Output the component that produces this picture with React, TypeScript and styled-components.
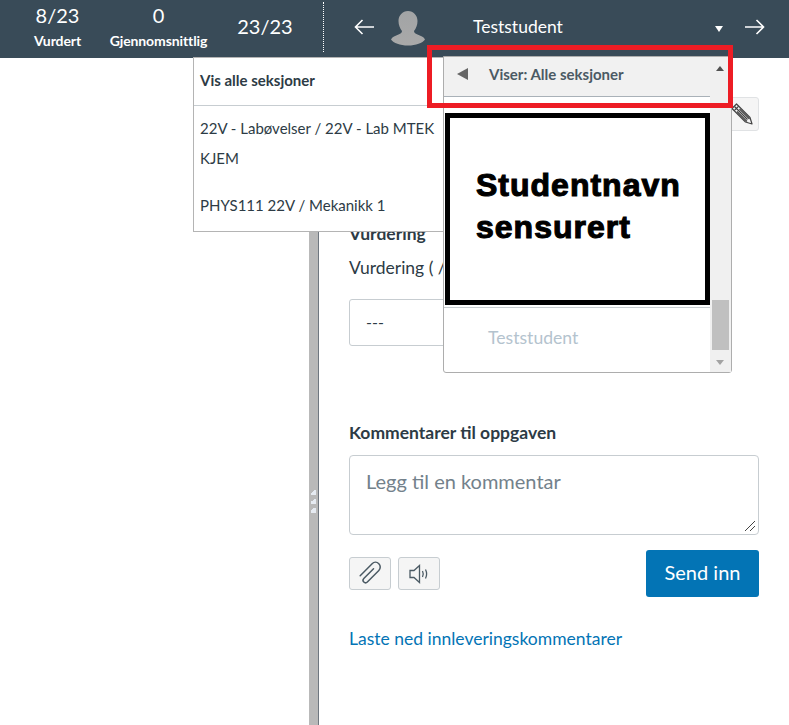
import React from "react";
import styled, { createGlobalStyle } from "styled-components";

const Global = createGlobalStyle`
  html, body { margin: 0; padding: 0; background: #fff; }
  body { font-family: "Lato", "Liberation Sans", sans-serif; color: #2d3b45; overflow: hidden; }
  * { box-sizing: border-box; }
`;

const Page = styled.div`
  position: relative;
  width: 789px;
  height: 725px;
  overflow: hidden;
`;

const Header = styled.header`
  height: 58px;
  background: #394b58;
  color: #fff;
  display: flex;
  align-items: flex-start;
`;

const Stat = styled.div<{ w: number }>`
  width: ${({ w }) => w}px;
  flex: none;
  display: flex;
  flex-direction: column;
  align-items: center;
  padding-top: 2px;
`;

const StatValue = styled.div`
  font-size: 20px;
  line-height: 26px;
`;

const StatLabel = styled.div`
  font-size: 14px;
  font-weight: 700;
  line-height: 16px;
  margin-top: 5px;
  letter-spacing: -0.1px;
  white-space: nowrap;
`;

const LoneStat = styled(Stat)`
  margin-left: 9px;
`;

const LoneValue = styled(StatValue)`
  margin-top: 11px;
`;

const Dotted = styled.div`
  width: 0;
  height: 50px;
  margin: 2px 30px 0 4px;
  border-left: 1px dotted #fff;
`;

const NavIcon = styled.svg`
  flex: none;
  width: 20px;
  height: 16px;
  margin-top: 19px;
`;

const Avatar = styled.svg`
  flex: none;
  width: 36px;
  height: 36px;
  margin: 10px 47px 0 16px;
`;

const StudentName = styled.div`
  flex: none;
  width: 240px;
  font-size: 17.5px;
  line-height: 24px;
  margin-top: 15px;
`;

const Caret = styled.div`
  flex: none;
  width: 0;
  height: 0;
  margin: 26px 22px 0 2px;
  border-left: 4px solid transparent;
  border-right: 4px solid transparent;
  border-top: 6px solid #fff;
`;

const Body = styled.div`
  display: flex;
  height: 667px;
`;

const LeftPane = styled.div`
  width: 309px;
  flex: none;
`;

const Resizer = styled.div`
  position: relative;
  width: 10px;
  flex: none;
  background: #b9b9b9;
  border-right: 1px solid #6f7780;
`;

const Grip = styled.div`
  position: absolute;
  left: 2px;
  top: 432px;
  display: flex;
  flex-direction: column;
  gap: 4px;
`;

const GripDot = styled.span`
  display: block;
  width: 5px;
  height: 5px;
  background: linear-gradient(135deg, #b9b9b9 30%, #e6ebf2 30%);
`;

const Detail = styled.main`
  flex: 1;
  padding: 39px 30px 0;
  display: flex;
  flex-direction: column;
`;

const EditRow = styled.div`
  display: flex;
  justify-content: flex-end;
`;

const EditButton = styled.div`
  width: 44px;
  height: 34px;
  background: #f5f5f5;
  border: 1px solid #e0e2e4;
  border-radius: 3px;
  display: flex;
  align-items: center;
  justify-content: flex-end;
  padding-right: 5px;
`;

const SectionTitle = styled.div`
  font-size: 17.5px;
  font-weight: 700;
  line-height: 20px;
`;

const GradeTitle = styled(SectionTitle)`
  margin-top: 93px;
`;

const GradeLabel = styled.div`
  font-size: 17.5px;
  line-height: 24px;
  margin-top: 12px;
`;

const GradeInput = styled.div`
  width: 200px;
  height: 47px;
  margin-top: 19px;
  padding-left: 16px;
  border: 1px solid #c7cdd1;
  border-radius: 3px;
  font-size: 16px;
  line-height: 43px;
`;

const CommentTitle = styled(SectionTitle)`
  margin-top: 77px;
`;

const CommentBox = styled.div`
  position: relative;
  height: 80px;
  margin-top: 12px;
  padding: 12px 16px;
  border: 1px solid #c7cdd1;
  border-radius: 4px;
  font-size: 20px;
  line-height: 26px;
  color: #73818b;
`;

const ResizeHandle = styled.svg`
  position: absolute;
  right: 2px;
  bottom: 2px;
  width: 12px;
  height: 12px;
`;

const ActionRow = styled.div`
  display: flex;
  align-items: flex-start;
  margin-top: 15px;
`;

const IconButton = styled.div`
  width: 42px;
  height: 33px;
  margin: 7px 7px 0 0;
  background: #f5f5f5;
  border: 1px solid #c7cdd1;
  border-radius: 3px;
  display: flex;
  align-items: center;
  justify-content: center;
`;

const SendButton = styled.div`
  width: 113px;
  height: 47px;
  margin-left: auto;
  background: #0374b5;
  border-radius: 3px;
  color: #fff;
  font-size: 20px;
  line-height: 44px;
  text-align: center;
`;

const DownloadLink = styled.a`
  margin-top: 31px;
  font-size: 17.5px;
  line-height: 22px;
  color: #0374b5;
`;

const SectionMenu = styled.div`
  position: absolute;
  left: 193px;
  top: 57px;
  width: 251px;
  height: 175px;
  background: #fff;
  border: 1px solid #b4b4b4;
  font-size: 15px;
`;

const MenuHead = styled.div`
  height: 48px;
  padding: 12px 6px 0;
  border-bottom: 1px solid #c7cdd1;
  font-weight: 700;
  line-height: 20px;
`;

const MenuItem = styled.div<{ gap: number }>`
  padding: 0 6px;
  margin-top: ${({ gap }) => gap}px;
  line-height: 30px;
`;

const StudentMenu = styled.div`
  position: absolute;
  left: 443px;
  top: 56px;
  width: 289px;
  height: 317px;
  background: #fff;
  border: 1px solid #adadad;
  border-radius: 0 0 3px 3px;
  display: flex;
`;

const MenuColumn = styled.div`
  flex: 1;
  min-width: 0;
  display: flex;
  flex-direction: column;
`;

const BackRow = styled.div`
  height: 40px;
  flex: none;
  padding-bottom: 5px;
  background: #f1f1f1;
  border-bottom: 1px solid #a9b1b8;
  display: flex;
  align-items: center;
  font-size: 15px;
  font-weight: 700;
  color: #4b5a64;
`;

const BackArrow = styled.div`
  width: 0;
  height: 0;
  margin: 0 21px 0 13px;
  border-top: 6px solid transparent;
  border-bottom: 6px solid transparent;
  border-right: 11px solid #666;
`;

const CensorBox = styled.div`
  height: 192px;
  flex: none;
  margin: 16px 0 0 1px;
  padding: 46px 0 0 26px;
  border: 5px solid #000;
  color: #000;
  font-family: "Liberation Sans", Arial, sans-serif;
  font-size: 32px;
  font-weight: 700;
  line-height: 42px;
  letter-spacing: 1px;
  -webkit-text-stroke: 1.1px #000;
`;

const FadedStudent = styled.div`
  margin-top: 2px;
  padding: 18px 0 0 44px;
  border-top: 1px solid #c7cdd1;
  font-size: 17.6px;
  line-height: 24px;
  color: #b4c3ce;
`;

const Scrollbar = styled.div`
  position: relative;
  width: 21px;
  flex: none;
  background: #f0f0f0;
`;

const ScrollUp = styled.div`
  position: absolute;
  left: 6px;
  top: 9px;
  width: 0;
  height: 0;
  border-left: 4.500px solid transparent;
  border-right: 4.500px solid transparent;
  border-bottom: 5px solid #505050;
`;

const ScrollDown = styled.div`
  position: absolute;
  left: 6px;
  bottom: 7px;
  width: 0;
  height: 0;
  border-left: 4.500px solid transparent;
  border-right: 4.500px solid transparent;
  border-top: 5px solid #a3a3a3;
`;

const ScrollThumb = styled.div`
  position: absolute;
  left: 2px;
  top: 243px;
  width: 17px;
  height: 50px;
  background: #c0c0c0;
`;

const Highlight = styled.div`
  position: absolute;
  left: 427px;
  top: 45px;
  width: 306px;
  height: 63px;
  border: 5px solid #ed1c24;
  pointer-events: none;
`;

const ArrowLeft = () => (
  <NavIcon viewBox="0 0 20 16" fill="none" stroke="#fff" strokeWidth="1.6">
    <path d="M20 8H1.500M8.500 1L1.500 8l7 7" />
  </NavIcon>
);

const ArrowRight = () => (
  <NavIcon viewBox="0 0 20 16" fill="none" stroke="#fff" strokeWidth="1.6">
    <path d="M0 8h18.500M11.500 1l7 7-7 7" />
  </NavIcon>
);

export default function App() {
  return (
    <Page>
      <Global />
      <Header>
        <Stat w={115}>
          <StatValue>8/23</StatValue>
          <StatLabel>Vurdert</StatLabel>
        </Stat>
        <Stat w={87}>
          <StatValue>0</StatValue>
          <StatLabel>Gjennomsnittlig</StatLabel>
        </Stat>
        <LoneStat w={108}>
          <LoneValue>23/23</LoneValue>
        </LoneStat>
        <Dotted />
        <ArrowLeft />
        <Avatar viewBox="0 0 36 36">
          <defs>
            <linearGradient id="av" x1="0" y1="0" x2="0" y2="1">
              <stop offset="0" stopColor="#a2a4a5" />
              <stop offset="1" stopColor="#a9a9a9" />
            </linearGradient>
          </defs>
          <path
            fill="url(#av)"
            d="M18 1c5.500 0 9.500 4.500 9.500 10 0 4-1.500 7.500-3.500 10 0 1.500 1 2.500 3.500 3.500 3 1.200 6.500 2.500 7.500 5-2.500 3.500-9 6-17 6s-14.500-2.500-17-6c1-2.500 4.500-3.800 7.500-5 2.500-1 3.500-2 3.500-3.500-2-2.500-3.500-6-3.500-10C8.500 5.500 12.500 1 18 1z"
          />
        </Avatar>
        <StudentName>Teststudent</StudentName>
        <Caret />
        <ArrowRight />
      </Header>
      <Body>
        <LeftPane />
        <Resizer>
          <Grip>
            <GripDot />
            <GripDot />
            <GripDot />
          </Grip>
        </Resizer>
        <Detail>
          <EditRow>
            <EditButton>
              <svg width="22" height="22" viewBox="0 0 22 22" fill="none" stroke="#444" strokeWidth="1.2" strokeLinejoin="round">
                <path d="M1 5.500L5.500 1 19 14.500 21 21l-6.500-2z" />
                <path d="M3.200 7.700L7.700 3.200M3.500 3.500l13 13M6 8.500l10 10M8.500 6l10 10" />
              </svg>
            </EditButton>
          </EditRow>
          <GradeTitle>Vurdering</GradeTitle>
          <GradeLabel>Vurdering ( / 1)</GradeLabel>
          <GradeInput>---</GradeInput>
          <CommentTitle>Kommentarer til oppgaven</CommentTitle>
          <CommentBox>
            Legg til en kommentar
            <ResizeHandle viewBox="0 0 12 12" stroke="#444" strokeWidth="1">
              <path d="M1 11L11 1M6 11l5-5" />
            </ResizeHandle>
          </CommentBox>
          <ActionRow>
            <IconButton>
              <svg width="30" height="30" viewBox="0 0 24 24" fill="none" stroke="#4b5a64" strokeWidth="1.2" strokeLinecap="round">
                <g transform="rotate(45 12 12)">
                  <path d="M11 7v11a2 2 0 0 0 4 0V5a3.800 3.800 0 0 0-7.600 0v13.500" />
                </g>
              </svg>
            </IconButton>
            <IconButton>
              <svg width="22" height="22" viewBox="0 0 22 22" fill="none" stroke="#4b5a64" strokeWidth="1.3">
                <path d="M2 7.500h4l5.500-5v17l-5.500-5H2z" />
                <path d="M14.500 8c1 2 1 4 0 6M17.500 6.500c1.500 3 1.500 6 0 9" />
              </svg>
            </IconButton>
            <SendButton>Send inn</SendButton>
          </ActionRow>
          <DownloadLink>Laste ned innleveringskommentarer</DownloadLink>
        </Detail>
      </Body>
      <SectionMenu>
        <MenuHead>Vis alle seksjoner</MenuHead>
        <MenuItem gap={7}>22V - Labøvelser / 22V - Lab MTEK KJEM</MenuItem>
        <MenuItem gap={17}>PHYS111 22V / Mekanikk 1</MenuItem>
      </SectionMenu>
      <StudentMenu>
        <MenuColumn>
          <BackRow>
            <BackArrow />
            Viser: Alle seksjoner
          </BackRow>
          <CensorBox>
            Studentnavn
            <br />
            sensurert
          </CensorBox>
          <FadedStudent>Teststudent</FadedStudent>
        </MenuColumn>
        <Scrollbar>
          <ScrollUp />
          <ScrollThumb />
          <ScrollDown />
        </Scrollbar>
      </StudentMenu>
      <Highlight />
    </Page>
  );
}
